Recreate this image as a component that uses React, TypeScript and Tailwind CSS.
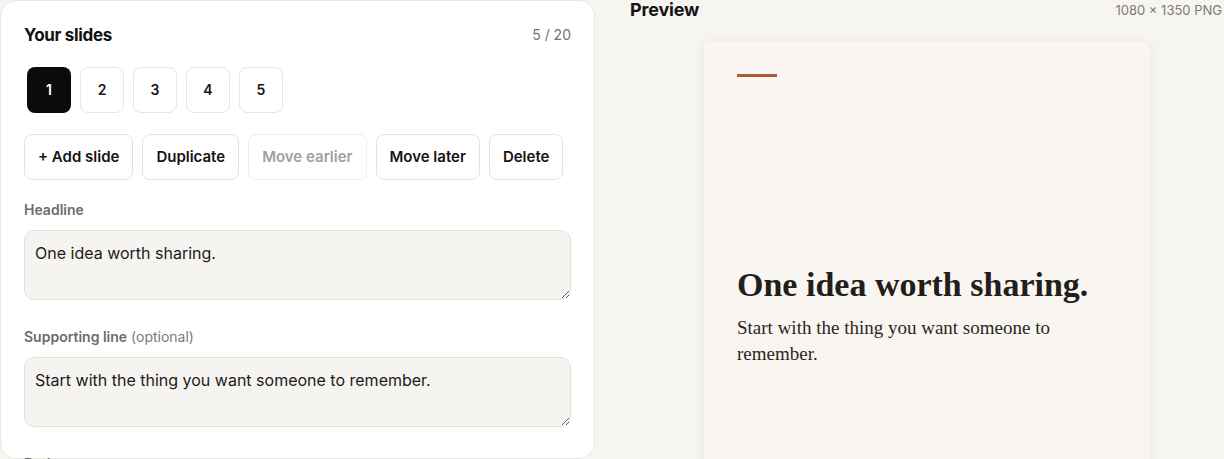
import { useState } from 'react';

const slides = [1, 2, 3, 4, 5];

const actions = [
  { label: '+ Add slide', disabled: false },
  { label: 'Duplicate', disabled: false },
  { label: 'Move earlier', disabled: true },
  { label: 'Move later', disabled: false },
  { label: 'Delete', disabled: false },
];

function Field({ label, hint, value }: { label: string; hint?: string; value: string }) {
  return (
    <div className="flex flex-col">
      <label className="text-sm font-semibold leading-5 text-[#6f6c68]">
        {label}
        {hint && <span className="font-normal text-[#7c7975]"> {hint}</span>}
      </label>
      <textarea
        defaultValue={value}
        className="mt-[10px] h-[70px] w-full resize-y rounded-[10px] border border-[#e4e1dc] bg-[#f6f4f0] px-[10px] py-[12px] text-[16px] leading-5 text-[#1c1b1a] outline-none"
      />
    </div>
  );
}

export default function App() {
  const [active, setActive] = useState(1);

  return (
    <div className="flex h-[459px] gap-[35px] overflow-hidden bg-[#f7f5f1] font-['Inter',sans-serif]">
      {/* Editor card */}
      <div className="flex w-[595px] shrink-0 flex-col rounded-2xl border border-[#e9e6e1] bg-white px-[23px] pt-[22px]">
        <div className="flex items-center justify-between">
          <h2 className="text-[17px] font-bold leading-6 tracking-[-0.02em] text-[#111]">Your slides</h2>
          <span className="text-sm text-[#77736f]">5 / 20</span>
        </div>

        <div className="mt-[20px] flex gap-[9px] pl-[3px]">
          {slides.map((n) => (
            <button
              key={n}
              type="button"
              onClick={() => setActive(n)}
              className={
                n === active
                  ? 'flex h-[46px] w-11 items-center justify-center rounded-lg bg-[#0b0b0b] text-sm font-semibold text-white'
                  : 'flex h-[46px] w-11 items-center justify-center rounded-lg border border-[#e9e6e1] bg-white text-sm font-semibold text-[#161616]'
              }
            >
              {n}
            </button>
          ))}
        </div>

        <div className="mt-[21px] flex gap-[9px]">
          {actions.map((a) => (
            <button
              key={a.label}
              type="button"
              disabled={a.disabled}
              className={
                a.disabled
                  ? 'h-[46px] shrink-0 whitespace-nowrap rounded-lg border border-[#f0eeea] bg-white px-[13px] text-[15px] font-semibold text-[#a3a09c]'
                  : 'h-[46px] shrink-0 whitespace-nowrap rounded-lg border border-[#e6e3de] bg-white px-[13px] text-[15px] font-semibold text-[#141414]'
              }
            >
              {a.label}
            </button>
          ))}
        </div>

        <div className="mt-5 flex flex-col gap-[27px]">
          <Field label="Headline" value="One idea worth sharing." />
          <Field label="Supporting line" hint="(optional)" value="Start with the thing you want someone to remember." />
          <Field label="Body" value="" />
        </div>
      </div>

      {/* Preview */}
      <div className="flex min-w-0 flex-1 flex-col">
        <div className="flex items-center justify-between pr-[2px]">
          <h2 className="text-[18px] font-bold leading-5 tracking-[-0.01em] text-[#141414]">Preview</h2>
          <span className="text-[13px] leading-5 text-[#7d7a76]">1080 × 1350 PNG</span>
        </div>

        <div className="mt-[22px] flex justify-center">
          <div className="flex h-[557px] w-[446px] flex-col rounded-md bg-[#f9f5f1] px-[33px] py-8 shadow-[0_2px_14px_rgba(60,40,20,0.07)]">
            <div className="h-[3px] w-10 bg-[#b0583a]" />
            <div className="flex flex-1 flex-col justify-center pb-3 font-['Liberation_Serif',serif]">
              <h1 className="text-[34px] font-bold leading-[40px] text-[#221e1b]">One idea worth sharing.</h1>
              <p className="mt-[10px] text-[19px] leading-[26px] text-[#2a2623]">
                Start with the thing you want someone to remember.
              </p>
            </div>
          </div>
        </div>
      </div>
    </div>
  );
}
